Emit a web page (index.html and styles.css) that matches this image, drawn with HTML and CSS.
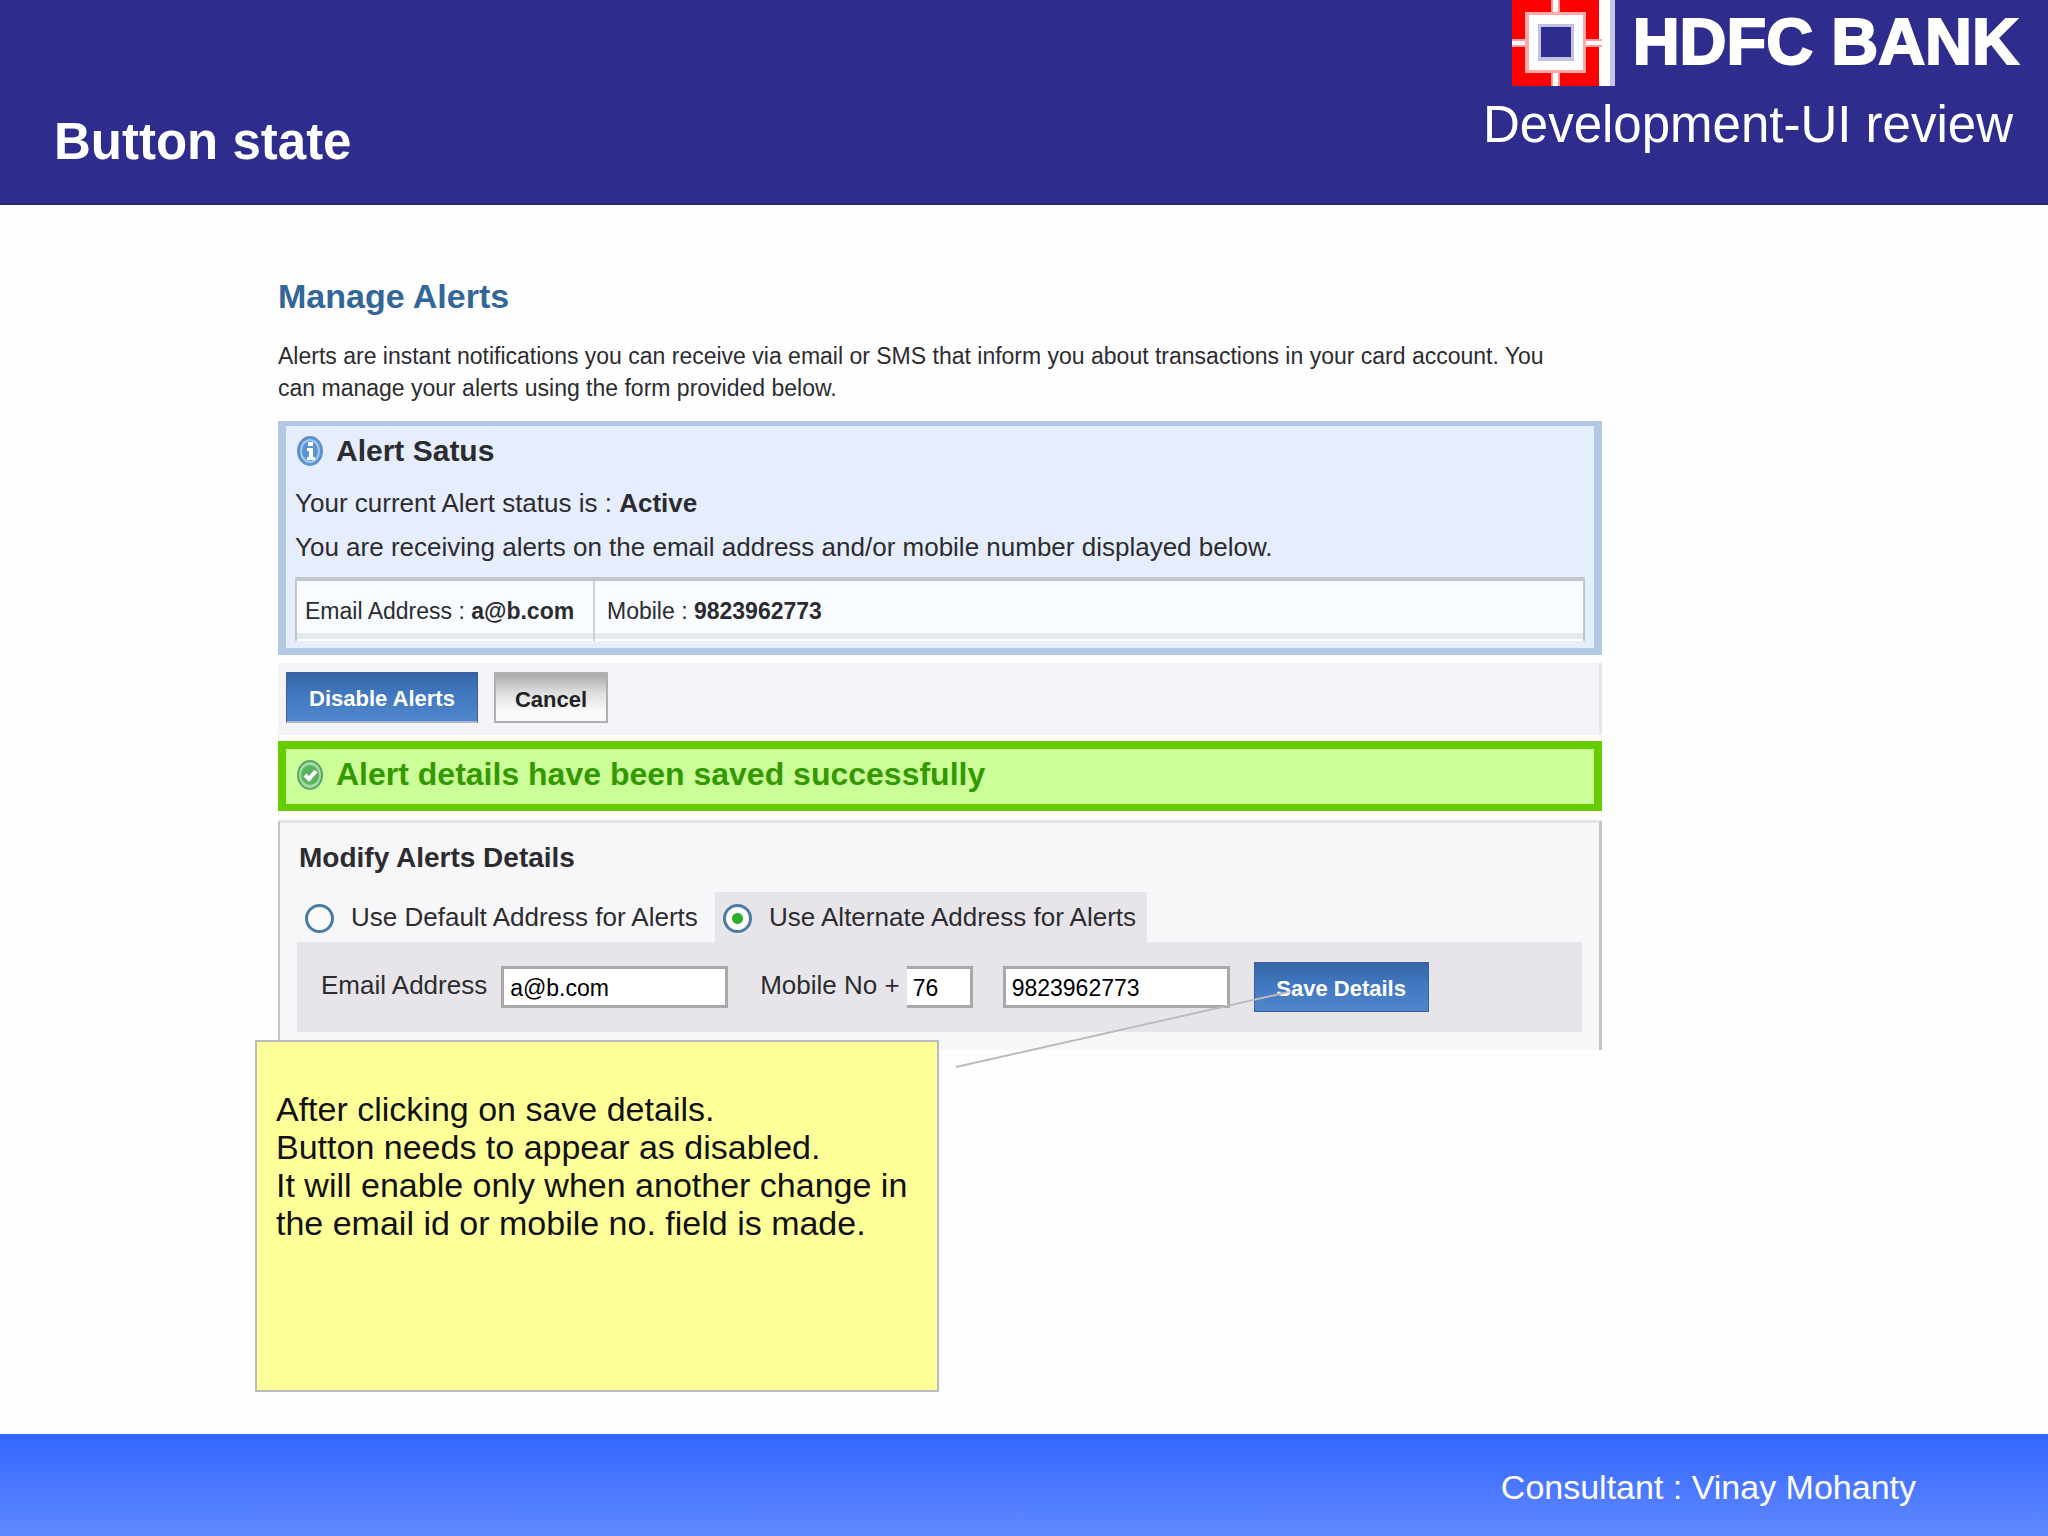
FILE: index.html
```html
<!DOCTYPE html>
<html lang="en">
<head>
<meta charset="utf-8">
<title>Button state</title>
<link rel="stylesheet" href="styles.css">
</head>
<body>
<header class="top">
  <h1 class="top-title">Button state</h1>
  <div class="top-right">
    <div class="brand">
      <svg class="brand-mark" viewBox="0 0 103 86" width="103" height="86" aria-hidden="true">
        <rect width="103" height="86" fill="#fff"/>
        <rect x="98" width="5" height="86" fill="#c5c5e4"/>
        <rect width="87" height="86" fill="#ff0000"/>
        <path d="M39 0h9v86h-9zM0 39h90v8H0z" fill="#ff9c9c"/>
        <path d="M41 0h5v86h-5zM0 41h90v4H0z" fill="#fff"/>
        <rect x="13" y="12" width="61" height="61" fill="#ffa8a8"/>
        <rect x="17" y="15" width="54" height="55" fill="#fff"/>
        <rect x="26" y="24" width="36" height="37" fill="#c2c2e0"/>
        <rect x="29" y="27" width="30" height="30" fill="#2e2c8c"/>
      </svg>
      <span class="brand-name">HDFC BANK</span>
    </div>
    <p class="top-sub">Development-UI review</p>
  </div>
</header>

<main class="content">
  <h2 class="page-title">Manage Alerts</h2>
  <p class="intro">Alerts are instant notifications you can receive via email or SMS that inform you about transactions in your card account. You can manage your alerts using the form provided below.</p>

  <section class="status">
    <h3 class="box-title">
      <svg class="box-icon" viewBox="0 0 27 30" width="27" height="30" aria-hidden="true">
        <ellipse cx="13" cy="15" rx="13" ry="15" fill="#5b92cf"/>
        <ellipse cx="13" cy="15" rx="10" ry="12" fill="#a9cbec"/>
        <ellipse cx="13" cy="15" rx="8" ry="10" fill="#5a94d4"/>
        <path d="M11 6h5v4h-5zM10 12h6v9h2v3h-8v-3h2v-6h-2z" fill="#fff"/>
      </svg>
      Alert Satus
    </h3>
    <p class="status-line">Your current Alert status is : <b>Active</b></p>
    <p class="status-line">You are receiving alerts on the email address and/or mobile number displayed below.</p>
    <table class="contacts">
      <tr>
        <td class="contact-mail">Email Address : <b>a@b.com</b></td>
        <td>Mobile : <b>9823962773</b></td>
      </tr>
    </table>
  </section>

  <div class="actions">
    <button class="btn btn-primary" type="button">Disable Alerts</button>
    <button class="btn btn-plain" type="button">Cancel</button>
  </div>

  <div class="success" role="status">
    <svg class="box-icon" viewBox="0 0 27 30" width="27" height="30" aria-hidden="true">
      <ellipse cx="13" cy="15" rx="13" ry="15" fill="#57a565"/>
      <ellipse cx="13" cy="15" rx="11" ry="13" fill="#a5dba0"/>
      <ellipse cx="13" cy="15" rx="9" ry="10" fill="#58b45c"/>
      <path d="M8 15l4 4 7-8" fill="none" stroke="#fff" stroke-width="4"/>
    </svg>
    Alert details have been saved successfully
  </div>

  <form class="modify">
    <h3 class="modify-title">Modify Alerts Details</h3>
    <div class="choices">
      <label class="choice"><input class="radio" type="radio" name="address">Use Default Address for Alerts</label>
      <label class="choice choice-on"><input class="radio" type="radio" name="address" checked>Use Alternate Address for Alerts</label>
    </div>
    <div class="fields">
      <label class="field-label" for="mail">Email Address</label>
      <input class="field field-mail" id="mail" type="text" value="a@b.com">
      <label class="field-label field-label-mobile" for="code">Mobile No +</label>
      <input class="field field-code" id="code" type="text" value="76">
      <input class="field field-number" type="text" value="9823962773" aria-label="Mobile number">
      <button class="btn btn-save" type="button">Save Details</button>
    </div>
    <svg class="pointer" viewBox="0 0 340 80" width="340" height="80" aria-hidden="true">
      <path d="M2 77L335 2" fill="none" stroke="#bbbbbd" stroke-width="2"/>
    </svg>
    <aside class="note">
      After clicking on save details.<br>
      Button needs to appear as disabled.<br>
      It will enable only when another change in the email id or mobile no. field is made.
    </aside>
  </form>
</main>

<footer class="bottom">Consultant : Vinay Mohanty</footer>
</body>
</html>
```
FILE: styles.css
```css
* { box-sizing: border-box; }

body {
  margin: 0;
  min-height: 100vh;
  display: flex;
  flex-direction: column;
  background: #fefefe;
  color: #2c2c30;
  font-family: "Liberation Sans", Arial, sans-serif;
}

h1, h2, h3, p { margin: 0; }

/* Header */
.top {
  display: flex;
  justify-content: space-between;
  height: 205px;
  background: #2e2c8c;
  border-bottom: 2px solid #27277f;
  color: #fff;
}
.top-title {
  padding: 112px 0 0 54px;
  font-size: 51px;
  line-height: 60px;
}
.top-right {
  display: flex;
  flex-direction: column;
  align-items: flex-end;
  padding-right: 35px;
}
.brand {
  display: flex;
  gap: 18px;
  margin-right: -6px;
}
.brand-mark { display: block; }
.brand-name {
  font-size: 65px;
  font-weight: bold;
  line-height: 83px;
  -webkit-text-stroke: 2px #fff;
}
.top-sub {
  margin-top: 9px;
  font-size: 51px;
  line-height: 60px;
}

/* Alerts page */
.content {
  flex: 1;
  padding: 69px 446px 0 278px;
}
.page-title {
  color: #336699;
  font-size: 34px;
  line-height: 44px;
}
.intro {
  max-width: 1300px;
  margin-top: 22px;
  font-size: 23px;
  line-height: 32px;
}

.status {
  height: 234px;
  margin-top: 17px;
  padding: 9px 9px 0;
  border: 8px solid #b3c7e6;
  border-width: 5px 8px 7px;
  background: #e6edfc;
  box-shadow: inset 0 0 0 2px #e2effd;
}
.box-title {
  display: flex;
  align-items: center;
  gap: 12px;
  padding-left: 2px;
  font-size: 30px;
  line-height: 32px;
}
.box-icon { flex: none; }
.status-line {
  margin-top: 20px;
  font-size: 26px;
  line-height: 32px;
}
.status-line + .status-line { margin-top: 12px; }
.contacts {
  width: 100%;
  margin-top: 14px;
  border: 2px solid #c0c8cc;
  border-top-width: 4px;
  border-bottom: 0;
  border-spacing: 0;
  background: #f8fbff;
  box-shadow: inset 0 -2px #fff, inset 0 -8px #e4e9ee;
  font-size: 23px;
}
.contacts td {
  height: 60px;
  padding: 0 12px 0 8px;
}
.contacts .contact-mail {
  width: 298px;
  border-right: 2px solid #ccd3d8;
  white-space: nowrap;
}
.contacts td + td { padding-left: 12px; }

.actions {
  display: flex;
  gap: 16px;
  height: 72px;
  margin-top: 8px;
  padding: 9px 8px;
  border-right: 3px solid #e3e6ea;
  background: #f4f3f7;
}
.btn {
  height: 51px;
  padding: 4px 22px 0;
  font-family: inherit;
  font-size: 22px;
  font-weight: bold;
  white-space: nowrap;
}
.btn-primary, .btn-save {
  border: 1px solid #3c5f9c;
  background: linear-gradient(#3566a8, #4076bd 40%, #5086cb);
  color: #fff;
}
.btn-primary { border-bottom: 2px solid #a9b6d0; }
.btn-plain {
  border: 2px solid #b0b0b3;
  padding: 4px 19px 0;
  background: linear-gradient(#a9a9ac, #dedee0 40%, #fafafa 80%);
  color: #222;
}

.success {
  display: flex;
  align-items: center;
  gap: 12px;
  height: 70px;
  margin-top: 6px;
  padding: 0 11px 4px;
  border: 8px solid #66cc00;
  border-bottom-width: 7px;
  background: #ccff99;
  color: #339900;
  font-size: 32px;
  font-weight: bold;
}

.modify {
  position: relative;
  height: 230px;
  margin-top: 9px;
  padding: 17px 17px 0;
  border: solid #c4c4c6;
  border-width: 3px 3px 0 2px;
  border-top-color: #e4e4e4;
  background: #f7f6f9;
}
.modify-title {
  padding-left: 2px;
  font-size: 28px;
  line-height: 36px;
}
.choices {
  display: flex;
  margin-top: 16px;
}
.choice {
  display: flex;
  align-items: center;
  gap: 17px;
  width: 418px;
  height: 50px;
  padding: 0 8px;
  font-size: 26px;
  white-space: nowrap;
}
.choice-on {
  width: 432px;
  background: #e7e5e9;
}
.radio {
  appearance: none;
  flex: none;
  width: 29px;
  height: 29px;
  margin: 2px 0 0;
  border: 3px solid #4a7ba6;
  border-radius: 50%;
  background: #fafafa;
}
.radio:checked { background: radial-gradient(circle, #2eb02a 5px, #fff 6px); }
.fields {
  display: flex;
  align-items: center;
  height: 90px;
  padding: 0 24px;
  background: #e7e5e9;
}
.field-label {
  font-size: 26px;
  line-height: 32px;
  padding-bottom: 4px;
  white-space: nowrap;
}
.field {
  height: 42px;
  padding: 2px 6px 0;
  border: 3px solid #a9a7aa;
  border-radius: 0;
  background: #fff;
  color: #000;
  font-family: inherit;
  font-size: 23px;
}
.field-mail { width: 227px; margin-left: 14px; }
.field-label-mobile { margin-left: 32px; }
.field-code {
  width: 66px;
  margin-left: 7px;
  border-left: 0;
}
.field-number { width: 227px; margin-left: 30px; }
.btn-save {
  height: 50px;
  width: 175px;
  padding: 4px 8px 0;
  margin-left: 24px;
}

/* Review callout laid over the form */
.pointer {
  position: absolute;
  left: 674px;
  top: 167px;
}
.note {
  position: absolute;
  left: -25px;
  top: 217px;
  width: 684px;
  height: 352px;
  padding: 48px 19px 0;
  border: 2px solid #bbbbbd;
  background: #ffff99;
  color: #111;
  font-size: 34px;
  line-height: 38px;
}

.bottom {
  height: 102px;
  padding: 33px 132px 0 0;
  background: linear-gradient(#3366ff, #6088ff);
  color: #fff;
  font-size: 34px;
  line-height: 40px;
  text-align: right;
}
```
